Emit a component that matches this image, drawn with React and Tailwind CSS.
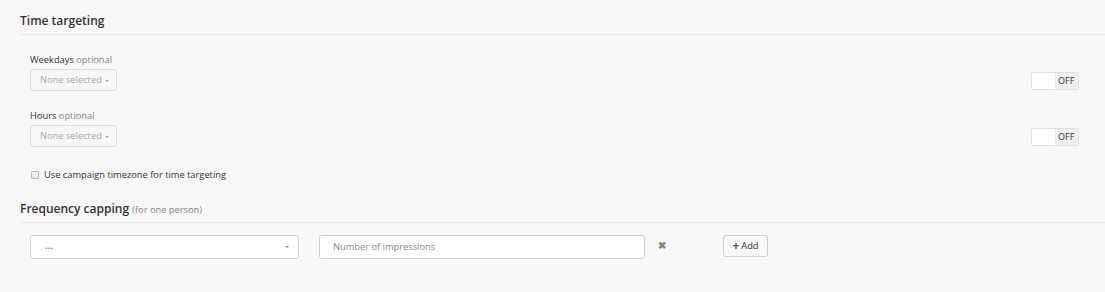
import React from "react";

const font = { fontFamily: '"Open Sans", "Noto Sans", sans-serif' };

function Toggle() {
  return (
    <div className="flex h-[18px] w-[48px] rounded-[2px] border border-[#e0e0e0] overflow-hidden">
      <div className="w-[23px] bg-white" />
      <div className="flex-1 bg-[#eeeeee] text-[9px] leading-[16px] text-[#333] pl-[3px]">OFF</div>
    </div>
  );
}

function NoneSelected() {
  return (
    <button className="flex items-center h-[22px] w-[87px] rounded-[3px] border border-[#dcdcdc] bg-[#f7f7f7] text-[9.3px] text-[#aaa] pl-[9px]">
      None selected
      <span className="ml-[3px] mt-[1px] border-x-[2px] border-t-[2px] border-x-transparent border-t-[#aaa]" />
    </button>
  );
}

function TargetRow({ label }) {
  return (
    <div className="flex items-end justify-between">
      <div>
        <div className="text-[9.3px] leading-[14px] text-[#333] mb-[2px] pt-[1px]">
          {label} <span className="text-[#888]">optional</span>
        </div>
        <NoneSelected />
      </div>
      <div className="mb-[1px]">
        <Toggle />
      </div>
    </div>
  );
}

export default function App() {
  return (
    <div className="h-[292px] w-full bg-[#f7f7f7] pl-[20px] pt-[12px]" style={font}>
      <h2 className="text-[12px] leading-[18px] font-semibold text-[#333] pb-[4px] border-b border-[#e6e6e6]">
        Time targeting
      </h2>

      <div className="pl-[10px] pr-[26px]">
        <div className="mt-[17px]">
          <TargetRow label="Weekdays" />
        </div>
        <div className="mt-[17px]">
          <TargetRow label="Hours" />
        </div>

        <label className="flex items-center mt-[21px] text-[9.3px] leading-[14px] text-[#333]">
          <span className="w-[8px] h-[8px] ml-[1px] rounded-[1px] border border-[#bbb] bg-[#eee]" />
          <span className="ml-[5px]">Use campaign timezone for time targeting</span>
        </label>
      </div>

      <h2 className="mt-[19px] text-[12px] leading-[16px] font-semibold text-[#333] pb-[4px] border-b border-[#e6e6e6]">
        Frequency capping <span className="text-[9.3px] font-normal text-[#888]">(for one person)</span>
      </h2>

      <div className="flex items-start pl-[10px] mt-[12px]">
        <div className="flex items-center justify-between h-[24px] w-[269px] rounded-[3px] border border-[#cfcfcf] bg-white pl-[14px] pr-[9px] text-[10px] text-[#555]">
          <span className="-mt-[3px]">...</span>
          <span className="border-x-[2px] border-t-[2px] border-x-transparent border-t-[#888]" />
        </div>
        <div className="ml-[20px] flex items-center h-[24px] w-[326px] rounded-[3px] border border-[#cfcfcf] bg-white pl-[13px] text-[9.3px] text-[#888]">
          Number of impressions
        </div>
        <span className="ml-[13px] mt-[3px] text-[10px] leading-[14px] font-bold text-[#888]">✖</span>
        <button className="ml-[57px] flex items-center h-[22px] w-[45px] justify-center rounded-[3px] border border-[#cfcfcf] bg-[#f7f7f7] text-[9.3px] text-[#333]">
          <span className="font-bold text-[12px] leading-[12px] mr-[2px] text-[#555]">+</span>Add
        </button>
      </div>
    </div>
  );
}
